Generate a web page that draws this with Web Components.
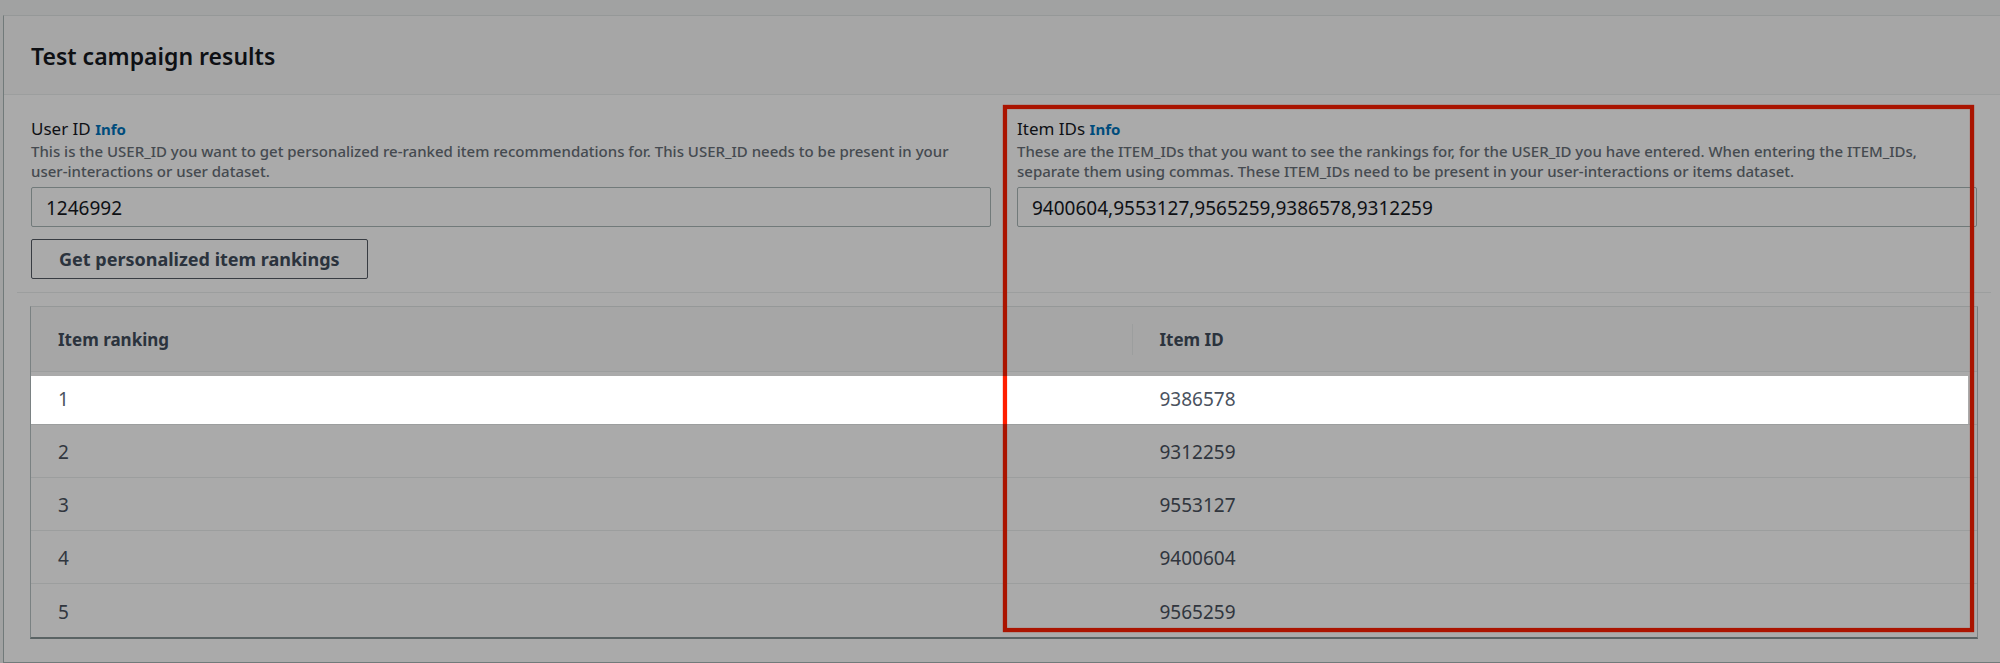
<!DOCTYPE html>
<html lang="en">
<head>
<meta charset="utf-8">
<meta name="viewport" content="width=device-width, initial-scale=1">
<title>Test campaign results</title>
<style>
  html, body { margin: 0; min-height: 100%; }
  body {
    box-sizing: border-box;
    padding: 15px 0 0 3px;
    background: #f2f3f3;
    color: #16191f;
    font-family: "Noto Sans", "Open Sans", sans-serif;
    overflow-x: hidden;
  }
</style>
</head>
<body>
<campaign-panel>
  <span slot="title">Test campaign results</span>
  <field-pair>
    <text-field label="User ID" value="1246992">This is the USER_ID you want to get personalized re-ranked item recommendations for. This USER_ID needs to be present in your user-interactions or user dataset.</text-field>
    <text-field label="Item IDs" value="9400604,9553127,9565259,9386578,9312259">These are the ITEM_IDs that you want to see the rankings for, for the USER_ID you have entered. When entering the ITEM_IDs, separate them using commas. These ITEM_IDs need to be present in your user-interactions or items dataset.</text-field>
  </field-pair>
  <action-button>Get personalized item rankings</action-button>
  <section-divider></section-divider>
  <ranking-table items="9386578,9312259,9553127,9400604,9565259"></ranking-table>
  <highlight-frame></highlight-frame>
</campaign-panel>

<script>
  class BaseElement extends HTMLElement {
    render(markup) {
      this.attachShadow({ mode: 'open' }).innerHTML = markup;
    }
  }

  // Card with a shaded title bar and a body for its content.
  customElements.define('campaign-panel', class extends BaseElement {
    connectedCallback() {
      this.render(`
        <style>
          :host {
            display: block;
            border: 1px solid #aab7b8;
            border-top-color: #e0e4e4;
            border-right: 0;
            background: #fff;
          }
          header {
            padding: 25px 27px 22px;
            border-bottom: 1px solid #eaeded;
            background: #fafafa;
          }
          h2 { margin: 0; font-size: 23px; font-weight: 600; line-height: 31px; }
          .body { position: relative; padding: 22px 23px 23px 27px; }
        </style>
        <header><h2><slot name="title"></slot></h2></header>
        <div class="body"><slot></slot></div>`);
    }
  });

  customElements.define('field-pair', class extends BaseElement {
    connectedCallback() {
      this.render(`
        <style>
          :host { display: grid; grid-template-columns: 1fr 1fr; gap: 26px; }
        </style>
        <slot></slot>`);
    }
  });

  // Labelled text box with an Info link and a description.
  customElements.define('text-field', class extends BaseElement {
    connectedCallback() {
      this.render(`
        <style>
          :host { display: block; min-width: 0; }
          .top { font-size: 17px; line-height: 24px; }
          a { color: #0073bb; font-size: 15px; font-weight: 700; text-decoration: none; }
          p {
            margin: 0 0 6px;
            padding-right: 24px;
            color: #687078;
            font-size: 15px;
            font-weight: 500;
            line-height: 20px;
          }
          input {
            display: block;
            box-sizing: border-box;
            width: 100%;
            height: 40px;
            padding: 2px 14px 0;
            border: 1px solid #aab7b8;
            border-radius: 2px;
            background: #fff;
            color: #16191f;
            font: 19px "Noto Sans", "Open Sans", sans-serif;
          }
        </style>
        <div class="top"><label for="box"></label> <a href="#info">Info</a></div>
        <p id="hint"><slot></slot></p>
        <input id="box" type="text" aria-describedby="hint">`);
      this.shadowRoot.querySelector('label').textContent = this.getAttribute('label');
      this.shadowRoot.querySelector('input').value = this.getAttribute('value');
    }
  });

  customElements.define('action-button', class extends BaseElement {
    connectedCallback() {
      this.render(`
        <style>
          :host { display: block; margin-top: 12px; }
          button {
            display: block;
            height: 40px;
            padding: 0 27px;
            border: 1px solid #545b64;
            border-radius: 2px;
            background: #fff;
            color: #414d5c;
            font: 700 18px "Noto Sans", "Open Sans", sans-serif;
          }
        </style>
        <button type="button"><slot></slot></button>`);
    }
  });

  customElements.define('section-divider', class extends BaseElement {
    connectedCallback() {
      this.render(`
        <style>
          :host { display: block; height: 1px; margin: 13px -14px; background: #eaeded; }
        </style>`);
    }
  });

  // Ranking table; the first row sits inside the spotlight.
  customElements.define('ranking-table', class extends BaseElement {
    connectedCallback() {
      const rows = this.getAttribute('items').split(',')
        .map((id, i) => `<tr><td>${i + 1}</td><td>${id}</td></tr>`).join('');
      this.render(`
        <style>
          :host {
            display: block;
            position: relative;
            margin: 0 -1px;
            border: 1px solid #b8c2c3;
            border-top-color: #e0e4e4;
            border-bottom: 2px solid #879596;
          }
          table { width: 100%; border-spacing: 0; table-layout: fixed; }
          th, td { box-sizing: border-box; padding: 0 27px; text-align: left; }
          th:first-child { width: 56.6%; }
          th {
            height: 65px;
            border-bottom: 1px solid #eaeded;
            background: #fafafa;
            color: #414d5c;
            font-size: 17px;
            font-weight: 700;
          }
          th + th {
            background: linear-gradient(#eaeded, #eaeded) 0 17px / 1px 31px no-repeat #fafafa;
          }
          td {
            height: 53px;
            padding-top: 2px;
            border-bottom: 1px solid #eaeded;
            color: #4a525e;
            font-size: 19px;
            line-height: 26px;
          }
          tr:last-child td { border-bottom: 0; }
        </style>
        <table>
          <thead><tr><th scope="col">Item ranking</th><th scope="col">Item ID</th></tr></thead>
          <tbody>${rows}</tbody>
        </table>
        <spot-light></spot-light>`);
    }
  });

  // Clear window over one table row; everything around it is dimmed.
  customElements.define('spot-light', class extends BaseElement {
    connectedCallback() {
      this.render(`
        <style>
          :host {
            position: absolute;
            z-index: 2;
            top: 69px;
            left: 0;
            right: 9px;
            height: 48px;
            box-shadow: 0 0 0 9999px rgba(0, 0, 0, 0.333);
            pointer-events: none;
          }
        </style>`);
    }
  });

  // Red outline around the Item IDs field and its table column.
  customElements.define('highlight-frame', class extends BaseElement {
    connectedCallback() {
      this.render(`
        <style>
          :host {
            position: absolute;
            z-index: 1;
            box-sizing: border-box;
            top: 10px;
            bottom: 30px;
            left: calc(50% + 1px);
            right: 26px;
            border: 4px solid #ff1e00;
            box-shadow: 0 0 1px #ff1e00, inset 0 0 1px #ff1e00;
            pointer-events: none;
          }
        </style>`);
    }
  });
</script>
</body>
</html>
